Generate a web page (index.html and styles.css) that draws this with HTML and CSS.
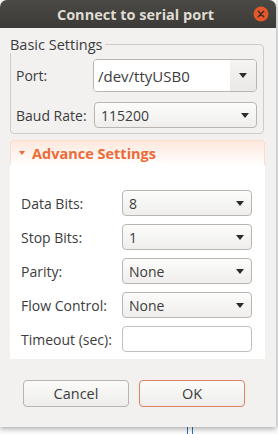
FILE: index.html
```html
<!DOCTYPE html>
<html>
<head>
<meta charset="utf-8">
<link rel="stylesheet" href="styles.css">
</head>
<body>
<div class="desk">
  <div class="top">
    <div class="window">
      <div class="titlebar">
        <span></span>
        <span class="title">Connect to serial port</span>
        <span class="close"><svg width="16" height="16" viewBox="0 0 16 16"><circle cx="8" cy="8" r="7.5" fill="#e4572a"/><path d="M5.3 5.3 L10.7 10.7 M10.7 5.3 L5.3 10.7" stroke="#3a2a22" stroke-width="1.4" stroke-linecap="round"/></svg></span>
      </div>
      <div class="content">
        <fieldset class="frame">
          <legend>Basic Settings</legend>
          <div class="grid basic">
            <span class="lbl">Port:</span>
            <div class="combo-entry">
              <span class="entry-text">/dev/ttyUSB0</span>
              <span class="entry-btn"><span class="arrow"></span></span>
            </div>
            <span class="lbl">Baud Rate:</span>
            <div class="combo"><span>115200</span><span class="arrow"></span></div>
          </div>
        </fieldset>
        <div class="expander">
          <div class="exp-head"><span class="tri"></span><span>Advance Settings</span></div>
          <div class="grid adv">
            <span class="lbl">Data Bits:</span>
            <div class="combo"><span>8</span><span class="arrow"></span></div>
            <span class="lbl">Stop Bits:</span>
            <div class="combo"><span>1</span><span class="arrow"></span></div>
            <span class="lbl">Parity:</span>
            <div class="combo"><span>None</span><span class="arrow"></span></div>
            <span class="lbl">Flow Control:</span>
            <div class="combo"><span>None</span><span class="arrow"></span></div>
            <span class="lbl">Timeout (sec):</span>
            <div class="entry"></div>
          </div>
        </div>
        <div class="buttons">
          <button class="btn">Cancel</button>
          <button class="btn ok">OK</button>
        </div>
      </div>
    </div>
    <div class="side"></div>
  </div>
  <div class="bottom"><span class="vline"></span><span class="vline"></span></div>
</div>
</body>
</html>
```
FILE: styles.css
```css
html, body {
  margin: 0;
  padding: 0;
}
body {
  width: 278px;
  height: 434px;
  overflow: hidden;
  background: #fafafa;
  font-family: "Open Sans", "DejaVu Sans", sans-serif;
  color: #3c3c3c;
}
.desk {
  display: flex;
  flex-direction: column;
  height: 434px;
}
.top {
  display: flex;
  height: 427px;
  flex: none;
}
.window {
  position: relative;
  z-index: 1;
  width: 276px;
  height: 427px;
  flex: none;
  display: flex;
  flex-direction: column;
  background: #f2f1f0;
  border-radius: 7px 7px 0 0;
  box-shadow: 0 2px 5px rgba(0,0,0,0.3);
}
.side {
  flex: 1;
  background: #ececec;
}
.bottom {
  flex: 1;
  display: flex;
  gap: 4px;
  padding-left: 187px;
}
.vline {
  width: 1px;
  background: #2f6fb8;
}
.titlebar {
  height: 28px;
  flex: none;
  display: grid;
  grid-template-columns: 1fr auto 1fr;
  align-items: center;
  background: linear-gradient(#4a4944, #3c3b37);
  border-radius: 7px 7px 0 0;
}
.title {
  color: #dfdbd2;
  font-weight: bold;
  font-size: 14.5px;
  margin-left: -5px;
}
.close {
  justify-self: end;
  margin-right: 7px;
  display: flex;
}
.content {
  padding: 0 12px 0 10px;
  display: flex;
  flex-direction: column;
}
.frame {
  margin: 8px 0 0 0;
  padding: 0 6px 5px 5px;
  border: 1px solid #cfccc8;
  border-radius: 4px;
}
.frame legend {
  padding: 0 3px 0 0;
  margin-left: -6px;
  font-size: 14.5px;
  line-height: 17px;
}
.grid {
  display: grid;
  align-items: center;
}
.basic {
  grid-template-columns: 78px 1fr;
  row-gap: 10px;
  margin-top: 6px;
}
.lbl {
  font-size: 14px;
}
.combo, .entry {
  height: 24px;
  border: 1px solid #b9b6b1;
  border-radius: 4px;
  display: flex;
  align-items: center;
  justify-content: space-between;
  padding: 0 7px 0 6px;
  font-size: 14px;
  background: linear-gradient(#fcfcfb, #efeeed);
}
.entry {
  background: #fff;
  border-color: #c2bfbb;
}
.combo-entry {
  height: 31px;
  margin-left: -1px;
  border: 1px solid #b9b6b1;
  border-radius: 4px;
  display: flex;
  overflow: hidden;
  font-size: 15px;
}
.entry-text {
  flex: 1;
  background: #fff;
  padding-left: 4px;
  display: flex;
  align-items: center;
}
.entry-btn {
  width: 26px;
  background: linear-gradient(#f5f4f3, #e9e8e6);
  display: flex;
  align-items: center;
  justify-content: center;
}
.arrow {
  width: 0;
  height: 0;
  border-left: 4.5px solid transparent;
  border-right: 4.5px solid transparent;
  border-top: 5px solid #2b2b2b;
}
.expander {
  margin-top: 6px;
  background: #fff;
  margin-right: -1px;
}
.exp-head {
  height: 24px;
  display: flex;
  align-items: center;
  gap: 7px;
  padding-left: 8px;
  color: #ee6a37;
  font-weight: bold;
  font-size: 14.5px;
  border: 1px solid #fbdccd;
  border-bottom: none;
  border-radius: 3px 3px 0 0;
  background: linear-gradient(#fde8dd, #ffffff);
}
.tri {
  width: 0;
  height: 0;
  border-left: 3.5px solid transparent;
  border-right: 3.5px solid transparent;
  border-top: 4px solid #ee6a37;
}
.adv {
  grid-template-columns: 101px 1fr;
  row-gap: 8px;
  padding: 25px 13px 7px 11px;
}
.buttons {
  display: flex;
  gap: 10px;
  padding: 21px 0 0 13px;
}
.btn {
  width: 106px;
  height: 27px;
  border: 1px solid #b9b6b1;
  border-radius: 4px;
  background: linear-gradient(#fbfbfa, #eeedec);
  font-family: "Open Sans", "DejaVu Sans", sans-serif;
  font-size: 14.5px;
  color: #3c3c3c;
  padding: 0;
}
.ok {
  border-color: #dc8463;
}
```
